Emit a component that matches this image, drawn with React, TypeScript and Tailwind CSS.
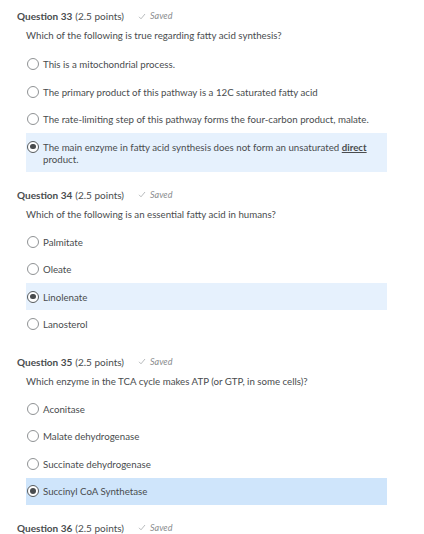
import React from "react";

type Opt = { label: React.ReactNode; selected?: boolean; strong?: boolean };

function Radio({ on }: { on?: boolean }) {
  return (
    <span
      className={
        "flex h-[12px] w-[12px] shrink-0 items-center justify-center rounded-full border bg-white " +
        (on ? "border-[#565a5c]" : "border-[#8f9294]")
      }
    >
      {on ? <span className="h-[5.5px] w-[5.5px] rounded-full bg-[#494c4e]" /> : null}
    </span>
  );
}

function Header({ n }: { n: number }) {
  return (
    <div className="flex h-[12px] items-center pl-[17px] text-[10px] leading-[12px] text-[#494c4e]">
      <span className="font-bold">Question {n}</span>
      <span className="ml-[3px]">(2.5 points)</span>
      <span className="ml-[14px] flex items-center text-[9px] italic text-[#8a8c8e]">
        <svg width="8" height="7" viewBox="0 0 8 7" className="mr-[4px]">
          <path d="M1 3.8 L3 5.8 L7 1" fill="none" stroke="#b0b3b5" strokeWidth="0.9" />
        </svg>
        Saved
      </span>
    </div>
  );
}

function Question({
  n,
  text,
  opts,
  textMt,
}: {
  n: number;
  text: string;
  opts: Opt[];
  textMt: string;
}) {
  return (
    <div>
      <Header n={n} />
      <div className="mt-[7px] pl-[26px] text-[9.7px] leading-[12px] text-[#494c4e]">{text}</div>
      <div className={"ml-[26px] flex w-[361px] flex-col gap-[0.5px] " + textMt}>
        {opts.map((o, i) => (
          <div
            key={i}
            className={
              "flex items-start gap-[4px] px-[1px] py-[7.5px] text-[9.7px] leading-[12px] text-[#494c4e] " +
              (o.selected ? (o.strong ? "bg-[#cfe5fb]" : "bg-[#e6f1fd]") : "")
            }
          >
            <Radio on={o.selected} />
            <span className="pr-[6px]">{o.label}</span>
          </div>
        ))}
      </div>
    </div>
  );
}

export default function App() {
  return (
    <div
      className="h-[534px] w-[424px] overflow-hidden bg-white pt-[10px]"
      style={{ fontFamily: "Lato, 'Open Sans', sans-serif" }}
    >
      <Question
        n={33}
        text="Which of the following is true regarding fatty acid synthesis?"
        textMt="mt-[9.5px]"
        opts={[
          { label: "This is a mitochondrial process." },
          { label: "The primary product of this pathway is a 12C saturated fatty acid" },
          {
            label:
              "The rate-limiting step of this pathway forms the four-carbon product, malate.",
          },
          {
            label: (
              <>
                The main enzyme in fatty acid synthesis does not form an unsaturated{" "}
                <span className="font-bold underline">direct</span> product.
              </>
            ),
            selected: true,
          },
        ]}
      />
      <div className="h-[16.5px]" />
      <Question
        n={34}
        text="Which of the following is an essential fatty acid in humans?"
        textMt="mt-[8.5px]"
        opts={[
          { label: "Palmitate" },
          { label: "Oleate" },
          { label: "Linolenate", selected: true },
          { label: "Lanosterol" },
        ]}
      />
      <div className="h-[18px]" />
      <Question
        n={35}
        text="Which enzyme in the TCA cycle makes ATP (or GTP, in some cells)?"
        textMt="mt-[8.5px]"
        opts={[
          { label: "Aconitase" },
          { label: "Malate dehydrogenase" },
          { label: "Succinate dehydrogenase" },
          { label: "Succinyl CoA Synthetase", selected: true, strong: true },
        ]}
      />
      <div className="h-[17px]" />
      <Header n={36} />
    </div>
  );
}
